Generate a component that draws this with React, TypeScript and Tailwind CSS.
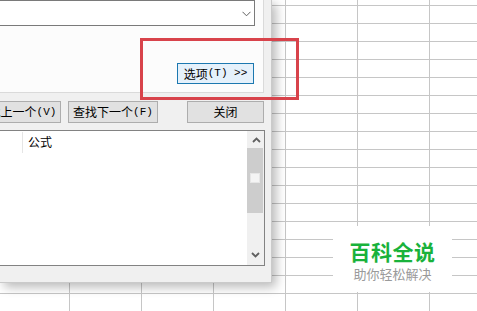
const CJK = "font-['Noto_Sans_CJK_SC','Noto_Sans',sans-serif]";

function Latin({ children }: { children: React.ReactNode }) {
  return <span className="font-['Liberation_Mono','DejaVu_Sans_Mono',monospace] text-[11px]">{children}</span>;
}

function WinButton({ className, children }: { className: string; children: React.ReactNode }) {
  return (
    <div className={`h-[22px] shrink-0 border border-[#adadad] bg-[#e1e1e1] flex items-center justify-center whitespace-nowrap leading-none ${className}`}>
      {children}
    </div>
  );
}

export default function App() {
  return (
    <div className={`relative w-[477px] h-[311px] overflow-hidden bg-white bg-[linear-gradient(to_right,#c6c6c6_1px,transparent_1px),linear-gradient(to_bottom,#c6c6c6_1px,transparent_1px)] bg-size-[72px_18px] bg-position-[69px_5px] ${CJK}`}>
      {/* dialog window */}
      <div className="absolute left-0 top-0 w-[272px] h-[283px] bg-[#f0f0f0] border-r border-b border-[#cacaca] shadow-[4px_4px_10px_rgba(0,0,0,0.28)] flex flex-col text-[12px] text-black">
        {/* tab page */}
        <div className="w-[264px] h-[93px] shrink-0 bg-[#fcfcfc] border-r border-b border-[#dadada] flex flex-col">
          <div className="w-[255px] h-[26px] bg-white border border-l-0 border-[#7a7a7a] flex items-center justify-end pr-[3px]">
            <svg width="9" height="6" viewBox="0 0 9 6" className="mt-[1px]">
              <path d="M0.5 0.8 L4.5 4.8 L8.5 0.8" fill="none" stroke="#606060" strokeWidth="1" />
            </svg>
          </div>
          <div className="flex justify-end pr-[9px] mt-[37px]">
            <div className="w-[77px] h-[21px] border border-[#1c78b0] bg-[#e5f1fb] flex items-center justify-center whitespace-nowrap leading-none">
              选项<Latin>(T) &gt;&gt;</Latin>
            </div>
          </div>
        </div>

        {/* button row */}
        <div className="flex mt-[8px] h-[22px] shrink-0">
          <WinButton className="ml-[-28px] w-[89px]">
            查找上一个<Latin>(V)</Latin>
          </WinButton>
          <WinButton className="ml-[7px] w-[90px]">
            查找下一个<Latin>(F)</Latin>
          </WinButton>
          <WinButton className="ml-[29px] w-[77px]">关闭</WinButton>
        </div>

        {/* results list */}
        <div className="mt-[7px] w-[265px] h-[136px] shrink-0 bg-white border border-l-0 border-[#828282] flex">
          <div className="flex-1 flex flex-col">
            <div className="h-[22px] flex items-center">
              <div className="w-[23px] h-[21px] border-r border-[#e5e5e5]" />
              <div className="pl-[5px] leading-none">公式</div>
            </div>
          </div>
          <div className="w-[17px] bg-[#f0f0f0] flex flex-col">
            <div className="h-[17px] flex items-center justify-center">
              <svg width="9" height="6" viewBox="0 0 9 6" className="ml-[1px] mt-[1px]">
                <path d="M1 5 L4.5 1.5 L8 5" fill="none" stroke="#606060" strokeWidth="1.8" />
              </svg>
            </div>
            <div className="h-[65px] w-[16px] bg-[#cdcdcd] flex items-center justify-center">
              <div className="w-[10px] h-[10px] bg-[#f4f4f4] border border-[#e6e6e6] mt-[-5px]" />
            </div>
            <div className="flex-1" />
            <div className="h-[17px] flex items-center justify-center">
              <svg width="9" height="6" viewBox="0 0 9 6" className="mt-[-4px]">
                <path d="M1 1 L4.5 4.5 L8 1" fill="none" stroke="#606060" strokeWidth="1.8" />
              </svg>
            </div>
          </div>
        </div>
      </div>

      {/* red highlight box */}
      <div className="absolute left-[140px] top-[38px] w-[159px] h-[62px] border-[3px] border-[#d8434b]" />

      {/* watermark */}
      <div className="absolute left-[333px] top-[226px] w-[119px] h-[66px] bg-white rounded-[8px] flex flex-col items-center pt-[15px]">
        <div className="text-[21px] leading-[21px] font-bold text-[#19b23b] tracking-[0.5px]">百科全说</div>
        <div className="mt-[5px] text-[13px] leading-[14px] text-[#9a9a9a]">助你轻松解决</div>
      </div>
    </div>
  );
}
